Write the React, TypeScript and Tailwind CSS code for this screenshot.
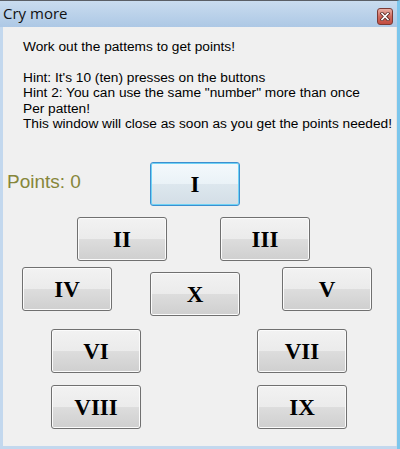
import React from "react";

const btnBase =
  "w-[90px] h-[44px] shrink-0 rounded-[3px] border flex items-center justify-center text-black font-bold text-[23px] leading-none";

function WinButton({ label, focused = false, className = "" }: { label: string; focused?: boolean; className?: string }) {
  return (
    <div
      className={
        btnBase +
        " " +
        (focused
          ? "border-[#3c8fd0] bg-[linear-gradient(to_bottom,#f4f9fc_0%,#eaf2f7_50%,#dde7ee_50%,#d3dee6_100%)] shadow-[inset_0_0_0_1px_#6fd2f5]"
          : "border-[#707070] bg-[linear-gradient(to_bottom,#f2f2f2_0%,#ebebeb_50%,#dddddd_50%,#cfcfcf_100%)] shadow-[inset_0_0_0_1px_#fbfbfb]") +
        " " +
        className
      }
      style={{ fontFamily: '"Liberation Serif", "Times New Roman", serif' }}
    >
      {label}
    </div>
  );
}

export default function App() {
  return (
    <div className="w-[400px] h-[449px] flex flex-col bg-[#c3d8ee] border-t border-[#5a5f66] border-r-[3px] border-r-[#7cc6ec] overflow-hidden">
      {/* Title bar */}
      <div className="h-[26px] shrink-0 flex items-center justify-between pl-[3px] pr-[4px] bg-[linear-gradient(to_bottom,#c9dcef,#adc8e5)]">
        <span
          className="text-[15px] text-[#111] leading-none mt-[-1px]"
          style={{ fontFamily: '"Open Sans", "Noto Sans", sans-serif' }}
        >
          Cry more
        </span>
        <div className="w-[16px] h-[17px] mt-[4px] rounded-[3px] border border-[#7b3a34] bg-[linear-gradient(to_bottom,#eab0a6,#cf6a5e_50%,#c24c40)] flex items-center justify-center">
          <svg width="10" height="9" viewBox="0 0 10 9">
            <path d="M2 1.5 L8 7.5 M8 1.5 L2 7.5" stroke="#5a2a26" strokeWidth="3.2" strokeLinecap="square" />
            <path d="M2 1.5 L8 7.5 M8 1.5 L2 7.5" stroke="#ffffff" strokeWidth="1.6" strokeLinecap="square" />
          </svg>
        </div>
      </div>
      {/* Client area */}
      <div className="flex-1 ml-[3px] mb-[3px] bg-[#f0f0f0] border-r border-[#e4e4e4] flex flex-col">
        <div
          className="pl-[20px] pt-[12px] text-[13.7px] leading-[15.4px] text-black whitespace-nowrap"
          style={{ fontFamily: '"Liberation Sans", Arial, sans-serif' }}
        >
          <div>Work out the pattems to get points!</div>
          <div>&nbsp;</div>
          <div>Hint: It's 10 (ten) presses on the buttons</div>
          <div>Hint 2: You can use the same "number" more than once</div>
          <div>Per patten!</div>
          <div>This window will close as soon as you get the points needed!</div>
        </div>

        <div className="flex items-center mt-[30.6px]">
          <div
            className="w-[147px] pl-[4px] text-[19px] text-[#86863a] leading-none mt-[-6px]"
            style={{ fontFamily: '"Liberation Sans", Arial, sans-serif' }}
          >
            Points: 0
          </div>
          <WinButton label="I" focused />
        </div>

        <div className="flex mt-[11px] pl-[74px] gap-[53px]">
          <WinButton label="II" />
          <WinButton label="III" />
        </div>

        <div className="flex items-start mt-[6px] pl-[19px]">
          <WinButton label="IV" />
          <WinButton label="X" className="ml-[38px] mt-[5px]" />
          <WinButton label="V" className="ml-[42px]" />
        </div>

        <div className="flex mt-[13px] pl-[48px] gap-[116px]">
          <WinButton label="VI" />
          <WinButton label="VII" />
        </div>

        <div className="flex mt-[12px] pl-[48px] gap-[116px]">
          <WinButton label="VIII" />
          <WinButton label="IX" />
        </div>
      </div>
    </div>
  );
}
